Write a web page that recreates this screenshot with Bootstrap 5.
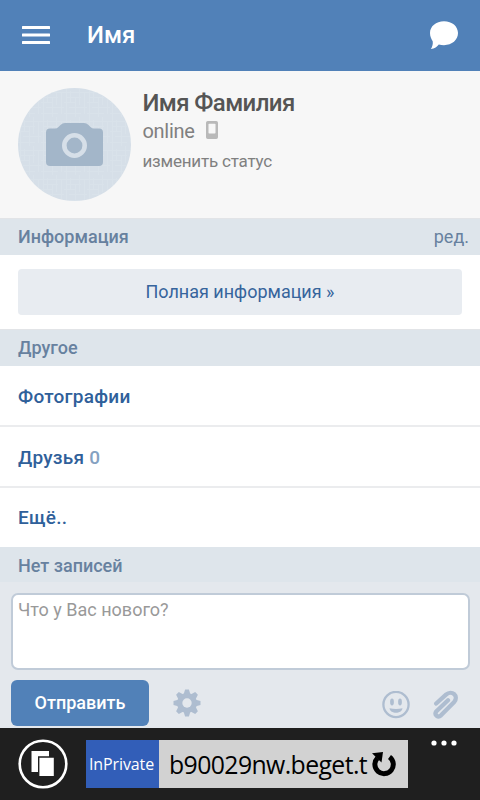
<!DOCTYPE html>
<html lang="ru">
<head>
<meta charset="utf-8">
<meta name="viewport" content="width=device-width, initial-scale=1">
<title>Имя</title>
<link href="https://cdn.jsdelivr.net/npm/bootstrap@5.3.0/dist/css/bootstrap.min.css" rel="stylesheet">
<script src="https://cdn.jsdelivr.net/npm/bootstrap@5.3.0/dist/js/bootstrap.bundle.min.js" defer></script>
<style>
body{font-family:Roboto,"Liberation Sans",sans-serif;font-size:18px;line-height:22px;color:#808080;height:800px;overflow:hidden}
svg{display:block;flex:none}
a{text-decoration:none;color:inherit}
.topbar{height:71px;background:#5181b8;color:#fff;padding:0 21px 2px 22px}
.topbar .title{font-size:24px;font-weight:500;margin-left:37px}
.profile{height:147px;background:#f7f7f7;padding:17px 18px 0}
.who{margin-left:11.500px}
.who h1{font-size:24px;line-height:30px;font-weight:500;color:#555;letter-spacing:-.6px}
.who .state{font-size:20px;line-height:26px;letter-spacing:-.3px}
.who .state svg{margin-left:8px}
.who .status{font-size:17px;line-height:22px;margin-top:6px;letter-spacing:-.2px}
.section-title{height:37px;background:#dee5eb;border-top:1px solid #e2e4e7;color:#67819f;padding:0 11px 0 18px;font-size:18px}
.section-title h2{font-size:18px;line-height:22px;font-weight:500}
.section-title.wall{height:35px;border-top:0;padding-top:2px}
.full{height:74px;padding:14px 18px}
.full .btn{height:46px;background:#e8ecf1;border:0;border-bottom:1px solid #e8ecf1;border-radius:4px;color:#36649c;font-size:18px}
.entry{height:61px;color:#2f609a;padding:2px 18px 0;border-bottom:2px solid #ebecee;font-weight:500;font-size:19px;letter-spacing:.25px}
.entry:last-child{border:0;height:59px;padding-top:0}
.entry span{color:#84a1c1;margin-left:5px}
.composer{height:146px;background:#e4e8ed;padding:11px 10px 0 11px;color:#aebdd0}
.composer textarea{height:77px;border:2px solid #c0cbd8;border-radius:7px;padding:3px 5px;font-size:18px;line-height:24px;resize:none;background:#fff}
.composer textarea::placeholder{color:#999;opacity:1}
.composer .send{width:138px;height:46px;background:#5181b8;border:0;border-radius:6px;font-size:18px;font-weight:500;color:#fff;padding:0 0 1px}
.tools{margin-top:10px;padding-right:10px}
.tools .clip{margin-left:22px}
.browser{height:72px;background:#1f1f1f;padding-left:18px;font-family:"Open Sans","Noto Sans",sans-serif}
.address{width:322px;height:48px;margin-left:18px;background:#d2d2d2;color:#000}
.private{width:73px;height:48px;background:#325eb8;color:#fff;font-size:16px;letter-spacing:-.1px;padding-right:2px}
.host{font-size:24.800px;letter-spacing:-.6px;margin-left:10px;width:202px;white-space:nowrap}
.more{margin-left:23px;padding-top:12px}
</style>
</head>
<body>
<header class="topbar d-flex align-items-center">
  <svg width="28" height="20" viewBox="0 0 28 20" fill="#fff"><rect y="1" width="28" height="3" rx=".5"/><rect y="8.500" width="28" height="3" rx=".5"/><rect y="16" width="28" height="3" rx=".5"/></svg>
  <div class="title">Имя</div>
  <svg class="ms-auto" width="30" height="31" viewBox="0 -1 30 31" fill="#fff"><path d="M15 1.200C7 1.200 1 6.300 1 13c0 3.500 1.300 6.100 2.700 8.200.4 2.500-.1 5.200-1.900 7.900 3.900-.4 6.400-2.200 8-4.500 1.500.4 3.400.6 5.200.6C23 25.200 29 20 29 13.100S23 1.200 15 1.200z"/></svg>
</header>
<main>
  <section class="profile d-flex align-items-start">
    <svg width="113" height="113" viewBox="0 0 113 113">
      <defs><pattern id="linen" width="23" height="29" patternUnits="userSpaceOnUse"><path d="M2.500 0v29M6.500 3v12M11.500 9v20M15.500 0v17M20.500 5v21M0 4.500h23M3 9.500h14M0 14.500h12M5 19.500h18M0 25.500h17" stroke="#e4eaf0" stroke-width="1" opacity=".22"/></pattern></defs>
      <circle cx="56.500" cy="56.500" r="56.500" fill="#d6dfe8"/><circle cx="56.500" cy="56.500" r="56.500" fill="url(#linen)"/>
      <path d="M32 40.500h5q2 0 3.500-1.500l2-2q2-2 4.500-2h19q2.500 0 4.500 2l2 2q1.500 1.500 3.500 1.500h5q4 0 4 4V74q0 4-4 4H32q-4 0-4-4V44.500q0-4 4-4z" fill="#a3b6c9"/>
      <circle cx="56.500" cy="57.500" r="10.200" fill="none" stroke="#d6dfe8" stroke-width="4.600"/>
    </svg>
    <div class="who">
      <h1 class="m-0">Имя Фамилия</h1>
      <div class="state d-flex align-items-center">online
        <svg width="17" height="22" viewBox="0 0 17 22"><path d="M4.800 1h8.400q1.800 0 1.800 1.800v14.400q0 1.800-1.800 1.800H4.800q-1.800 0-1.800-1.800V2.800Q3 1 4.800 1z" fill="#b9b9b9"/><rect x="5.500" y="3.800" width="7" height="9.700" rx=".8" fill="#f7f7f7"/></svg>
      </div>
      <div class="status">изменить статус</div>
    </div>
  </section>
  <section>
    <div class="section-title d-flex justify-content-between align-items-center"><h2 class="m-0">Информация</h2><a href="#">ред.</a></div>
    <div class="full"><a class="btn w-100 d-flex align-items-center justify-content-center" href="#">Полная информация »</a></div>
  </section>
  <section>
    <div class="section-title d-flex align-items-center"><h2 class="m-0">Другое</h2></div>
    <nav>
      <a class="entry d-flex align-items-center" href="#">Фотографии</a>
      <a class="entry d-flex align-items-center" href="#">Друзья <span>0</span></a>
      <a class="entry d-flex align-items-center" href="#">Ещё..</a>
    </nav>
  </section>
  <section>
    <div class="section-title wall d-flex align-items-center"><h2 class="m-0">Нет записей</h2></div>
    <div class="composer">
      <textarea class="d-block w-100" placeholder="Что у Вас нового?"></textarea>
      <div class="tools d-flex align-items-center">
        <button class="btn send" type="button">Отправить</button>
        <svg class="ms-4" width="28" height="28" viewBox="-14 -14 28 28"><g fill="#aebdd0"><g id="teeth"><path id="tooth" d="M-3.600-8L-1.900-13.500H1.900L3.600-8V8L1.900 13.500H-1.900L-3.600 8z"/><use href="#tooth" transform="rotate(90)"/></g><use href="#teeth" transform="rotate(45)"/><circle r="10"/></g><circle r="4.700" fill="#e4e8ed"/></svg>
        <svg class="ms-auto mt-1" width="28" height="28" viewBox="0 0 28 28" fill="#aebdd0"><circle cx="14" cy="13.500" r="12.600" fill="none" stroke="#aebdd0" stroke-width="2.300"/><ellipse cx="10" cy="11" rx="1.900" ry="3.400"/><ellipse cx="18" cy="11" rx="1.900" ry="3.400"/><path d="M7.500 17.300q6.500 1.500 13 0c-.7 6-12.300 6-13 0z"/></svg>
        <svg class="clip mt-1" width="28" height="30" viewBox="0 0 28 30" fill="none" stroke="#aebdd0" stroke-linecap="round" stroke-linejoin="round"><path stroke-width="4.300" d="M4.200 13.500L14 4.700C20-.5 27 6 22.200 12L9 25.300C6 28 2 25 4.200 21.500L16 10.200"/></svg>
      </div>
    </div>
  </section>
</main>
<footer class="browser d-flex align-items-center">
  <svg width="50" height="50" viewBox="0 0 50 50"><circle cx="25" cy="25" r="23.300" fill="none" stroke="#fff" stroke-width="2.600"/><path d="M13.500 12H31v21H13.500z" fill="#fff"/><path d="M20.700 18h15.800v19.700H20.700z" fill="#fff" stroke="#1f1f1f" stroke-width="1.400"/></svg>
  <div class="address d-flex align-items-center">
    <div class="private d-flex align-items-center justify-content-center">InPrivate</div>
    <div class="host">b90029nw.beget.t</div>
    <svg width="26" height="26" viewBox="0 0 26 26"><path d="M6.500 7A9.200 9.200 0 1 0 18.500 6" fill="none" stroke="#000" stroke-width="5"/><path d="M1 2.300L12 1 10.500 11.500z"/></svg>
  </div>
  <svg class="more align-self-start" width="26" height="18" viewBox="0 0 26 6" fill="#fff"><circle cx="3" cy="3" r="2.600"/><circle cx="13" cy="3" r="2.600"/><circle cx="23" cy="3" r="2.600"/></svg>
</footer>
</body>
</html>
